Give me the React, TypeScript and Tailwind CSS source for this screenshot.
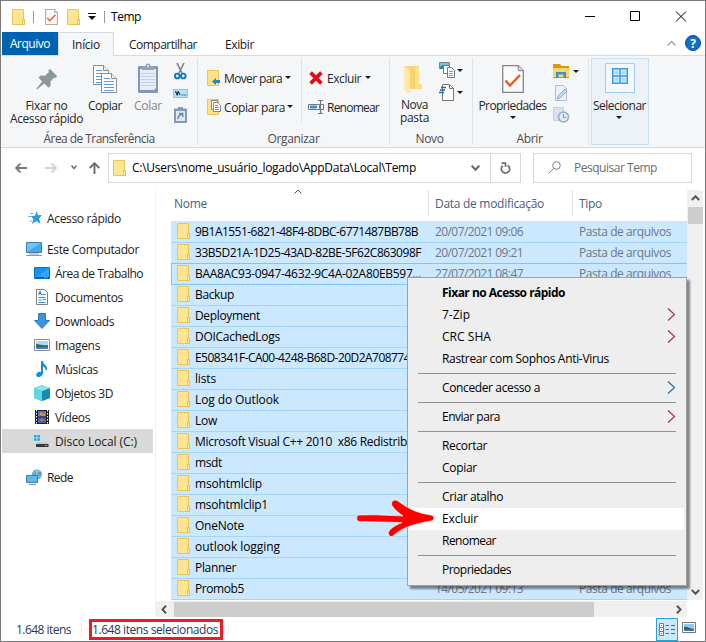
import { useLayoutEffect, useRef, type ReactNode } from "react";

/** Single line label whose letter spacing is tuned so that it spans `w` pixels. */
function T({ w, children, className = "" }: { w: number; children: string; className?: string }) {
  const ref = useRef<HTMLSpanElement>(null);
  useLayoutEffect(() => {
    const el = ref.current;
    if (!el) return;
    el.style.letterSpacing = "0px";
    const natural = el.getBoundingClientRect().width;
    el.style.letterSpacing = `${(w - natural) / children.length}px`;
  }, [w, children]);
  return (
    <span ref={ref} className={`inline-block shrink-0 whitespace-pre ${className}`}>
      {children}
    </span>
  );
}

function Folder({ className = "" }: { className?: string }) {
  return (
    <svg width="13" height="16" viewBox="0 0 13 16" className={`shrink-0 ${className}`}>
      <path d="M.5.5h11v10h1v5H.5z" fill="#ffe492" stroke="#e9c457" />
      <path d="M10.5 14.500V10.500h2v5h-2z" fill="#fff0b5" stroke="#e3b63a" strokeWidth=".8" />
    </svg>
  );
}

function Caret({ className = "" }: { className?: string }) {
  return (
    <svg width="6" height="3" viewBox="0 0 6 3" className={`shrink-0 ${className}`}>
      <path d="M0 0h6L3 3z" fill="#1a1a1a" />
    </svg>
  );
}

function Chevron({ d, color = "#555", w = 9, h = 6, sw = 2, className = "" }: { d: string; color?: string; w?: number; h?: number; sw?: number; className?: string }) {
  return (
    <svg width={w} height={h} viewBox={`0 0 ${w} ${h}`} fill="none" stroke={color} strokeWidth={sw} className={`shrink-0 ${className}`}>
      <path d={d} />
    </svg>
  );
}

function CheckDoc({ w, h }: { w: number; h: number }) {
  return (
    <svg width={w} height={h} viewBox="0 0 22 28" className="shrink-0">
      <path d="M.7.700h15.600l5 5v21.600H.700z" fill="#fafafa" stroke="#858585" strokeWidth="1.300" />
      <path d="M16.300.700v5h5" fill="#ddd" stroke="#858585" />
      <path d="M3.500 15.500l4.500 5L18 10" fill="none" stroke="#f1581e" strokeWidth="2.400" />
    </svg>
  );
}

function Page({ x, y }: { x: number; y: number }) {
  return (
    <g transform={`translate(${x} ${y})`}>
      <path d="M.5.5h10l5 5v14H.5z" fill="#fff" stroke="#8c8c8c" />
      <path d="M10.500.5v5h5" fill="#eee" stroke="#8c8c8c" />
      <path d="M3 5.500h6M3 8.500h10M3 11.500h10M3 14.500h10M3 17.500h10" stroke="#5c9de0" />
    </g>
  );
}

function TitleBar() {
  return (
    <div className="flex h-[31px] items-center">
      <Folder className="ml-[11px]" />
      <div className="ml-2 h-3 w-px bg-[#999]" />
      <div className="ml-[11px] flex"><CheckDoc w={13} h={16} /></div>
      <Folder className="ml-[9px]" />
      <svg width="8" height="7" viewBox="0 0 8 7" className="ml-2"><path d="M0 .5h8" stroke="#111" /><path d="M0 3h8L4 7z" fill="#111" /></svg>
      <div className="ml-2 h-3 w-px bg-[#999]" />
      <T w={30} className="ml-[6px] text-[12px] text-black">Temp</T>
      <div className="flex-1" />
      <svg width="102" height="11" viewBox="0 0 102 11" fill="none" stroke="#000" className="mr-[18px]">
        <path d="M0 5.500h10M45.500.5h9v9h-9zM91 .5l10 10M101 .5l-10 10" />
      </svg>
    </div>
  );
}

function Tabs() {
  return (
    <div className="relative z-10 flex h-6 items-stretch pl-px">
      <div className="flex h-[23px] w-14 items-center justify-center bg-[#0063b1] text-white"><T w={40}>Arquivo</T></div>
      <div className="flex w-14 items-center justify-center border border-b-0 border-[#d9dadc] bg-[#f5f6f7]"><T w={28}>Início</T></div>
      <div className="ml-[15px] flex items-center"><T w={68}>Compartilhar</T></div>
      <div className="ml-7 flex items-center"><T w={29}>Exibir</T></div>
      <div className="flex-1" />
      <Chevron d="M.5 5.500l4-4 4 4" color="#a5a5a5" sw={1.500} className="mt-2" />
      <div className="mr-1 ml-[9px] mt-[3px] flex size-4 items-center justify-center rounded-full border border-[#0a4f93] bg-[#0f6fce] text-[12px] font-bold text-white">?</div>
    </div>
  );
}

function Group({ label, w, className, children }: { label: string; w: number; className: string; children: ReactNode }) {
  return (
    <div className={`flex h-[87px] shrink-0 flex-col border-r border-[#e0e1e2] ${className}`}>
      <div className="flex h-[73px] items-start">{children}</div>
      <div className="flex h-[14px] items-center justify-center text-[#4c4c50]"><T w={w}>{label}</T></div>
    </div>
  );
}

const Scissors = () => (
  <svg width="13" height="17" viewBox="0 0 13 17" fill="none">
    <path d="M3 0l5.500 11M10 0L4.500 11" stroke="#788592" strokeWidth="1.600" />
    <ellipse cx="3.300" cy="13" rx="2.300" ry="2.400" stroke="#0878c8" strokeWidth="1.900" />
    <ellipse cx="9.300" cy="13" rx="2.300" ry="2.400" stroke="#0878c8" strokeWidth="1.900" />
  </svg>
);

const Clipboard = () => (
  <svg width="20" height="30" viewBox="0 0 20 30">
    <rect x="0" y="3" width="20" height="27" rx="1" fill="#8496b5" />
    <path d="M2 6h16v19l-2 2H2z" fill="#e4edf8" />
    <path d="M3 10.500h14M3 13.500h14M3 16.500h14M3 19.500h14M3 22.500h14" stroke="#c4d2e5" />
    <path d="M4 7V3h3.500a2.500 2.500 0 015 0H16v4z" fill="#93a3bd" />
    <circle cx="10" cy="3" r="1" fill="#e4edf8" />
  </svg>
);

const Shortcut = () => (
  <svg width="13" height="16" viewBox="0 0 13 16">
    <path d="M0 1.500h4V0h5v1.500h4V16H0z" fill="#8799b8" />
    <path d="M2 4h9v10H2z" fill="#dfe9f6" />
    <path d="M4 12c0-2.500 1-4 4-5M5 6.500h3.700v3.500" fill="none" stroke="#6e86ab" strokeWidth="1.500" />
  </svg>
);

function Ribbon() {
  return (
    <div className="flex h-[93px] border-y border-[#d9dadc] bg-[#f5f6f7] pt-[2px] text-[#262626]">
      <Group label="Área de Transferência" w={111} className="w-[197px]">
        <div className="ml-[9px] flex w-[73px] flex-col items-center">
          <svg width="21" height="21" viewBox="0 0 21 21" className="mt-[11px] mb-[9px]">
            <path d="M14 0l7 7-1 2-2-.5-3.500 4 .2 4-2.200 2.200-4.300-4.300L1 20.500l-.6-.7 5.800-7.400L2.500 8.800l2-2.300 4.500.3 3.800-3.600-.3-2z" fill="#8b979d" />
          </svg>
          <T w={42} className="leading-[13px]">Fixar no</T>
          <T w={73} className="leading-[13px]">Acesso rápido</T>
        </div>
        <div className="ml-[5px] flex w-[34px] flex-col items-center">
          <svg width="26" height="29" viewBox="0 0 26 29" className="mt-[7px] mb-[5px] ml-[2px]"><Page x={0} y={0} /><Page x={8} y={8} /></svg>
          <T w={34} className="leading-[13px]">Copiar</T>
        </div>
        <div className="ml-[12px] flex w-[28px] flex-col items-center text-[#858585]">
          <div className="mt-[5px] mb-[6px]"><Clipboard /></div>
          <T w={28} className="leading-[13px]">Colar</T>
        </div>
        <div className="ml-[11px] flex flex-col items-center pt-[5px]">
          <Scissors />
          <svg width="15" height="9" viewBox="0 0 15 9" className="mt-[9px]"><path d="M.5.5h14v8H.500z" fill="#b8e2ff" stroke="#8bc3e9" /><path d="M2.500 2l1.500 4M5 2l2 4M4.500 3v3.500M8.500 6h1.200M10.500 6h1.200M12.300 6h1" fill="none" stroke="#123c61" strokeWidth="1.200" /></svg>
          <div className="mt-[9px]"><Shortcut /></div>
        </div>
      </Group>

      <Group label="Organizar" w={52} className="w-[192px]">
        <div className="ml-[9px] flex h-[64px] w-[95px] flex-col border-r border-[#e0e1e2] pt-[12px]">
          <div className="flex h-4 items-center">
            <svg width="13" height="16" viewBox="0 0 13 16" className="shrink-0 overflow-visible"><path d="M.5.500h11v15H.5z" fill="#ffe288" stroke="#e9c457" /><path d="M5 11.500l4-3.500v2h4v3H9v2z" fill="#2a85d0" /></svg>
            <T w={58} className="ml-1">Mover para</T><Caret className="-mt-px ml-[3px]" />
          </div>
          <div className="mt-[13px] flex h-4 items-center">
            <svg width="13" height="16" viewBox="0 0 13 16" className="shrink-0 overflow-visible"><path d="M.5.500h11v15H.5z" fill="#ffe288" stroke="#e9c457" /><path d="M4.500 1.500h6v9h-6z" fill="#fff" stroke="#7e8790" /><path d="M6.500 3.500h4l3 3v6h-7z" fill="#fff" stroke="#7e8790" /><path d="M8 6.500h3M8 8.500h4M8 10.500h4" stroke="#4a94dc" /></svg>
            <T w={61} className="ml-1">Copiar para</T><Caret className="-mt-px ml-[2px]" />
          </div>
        </div>
        <div className="ml-[7px] flex flex-col pt-[12px]">
          <div className="flex h-4 items-center">
            <svg width="14" height="14" viewBox="0 0 13 13" className="mr-[3px]"><path d="M1.500 1.500l10 10M11.500 1.500l-10 10" stroke="#e40b12" strokeWidth="3.400" /></svg>
            <T w={34} className="ml-px">Excluir</T><Caret className="-mt-px ml-1" />
          </div>
          <div className="mt-[13px] flex h-4 items-center">
            <svg width="16" height="14" viewBox="0 0 16 14" className="-ml-px"><path d="M.5 4.500h11v5H.5zM13 4.500h2.500v5H13" fill="#fff" stroke="#777" /><path d="M2 5.500h7v3H2z" fill="#2890e5" /><path d="M10 .5h5M10 13.500h5M12.500 0v14" stroke="#777" strokeWidth="1.200" /></svg>
            <T w={52} className="ml-[3px]">Renomear</T>
          </div>
        </div>
      </Group>

      <Group label="Novo" w={28} className="w-[83px] [&>div:last-child]:pr-[3px]">
        <div className="ml-[9px] flex w-[31px] flex-col items-center">
          <svg width="20" height="28" viewBox="0 0 20 28" className="mt-[8px] mb-[4px] -ml-[4px]"><path d="M1 0h15v18l3 1v4H7L1 24z" fill="#f8d36f" /><path d="M12 0h4v18l3 1v4h-7z" fill="#ffdf85" /><path d="M1 0l6 4v22l-1 2-5-4z" fill="#ffe9a8" /></svg>
          <T w={27} className="leading-[13px]">Nova</T>
          <T w={29} className="leading-[13px]">pasta</T>
        </div>
        <div className="ml-[9px] pt-[4px]">
          <div className="flex items-center">
            <svg width="16" height="17" viewBox="0 0 16 17"><path d="M.5.500h10v6H.5z" fill="#77bde8" stroke="#778593" /><path d="M1 5l3-2 3 2v2H1z" fill="#35806f" /><path d="M4.500 3.500h6v8h-6z" fill="#fff" stroke="#777" /><path d="M8.500 5.500h4l3 3v7h-7z" fill="#fff" stroke="#777" /><path d="M10 9.500h4M10 11.500h4M10 13.500h4" stroke="#6ba4dc" /></svg>
            <Caret className="-mt-px ml-[2px]" />
          </div>
          <div className="mt-[5px] flex items-center">
            <svg width="16" height="17" viewBox="0 0 16 17"><path d="M3.500.5h7l4 4v12h-11z" fill="#fff" stroke="#777" /><path d="M10.500.500v4h4" fill="none" stroke="#777" /><path d="M2 3.500h5M1 6h5M0 8.500h5" stroke="#2365b4" strokeWidth="1.300" /></svg>
            <Caret className="-mt-px ml-[2px]" />
          </div>
        </div>
      </Group>

      <Group label="Abrir" w={26} className="w-[116px] [&>div:last-child]:pr-[2px]">
        <div className="ml-[5px] flex w-[69px] flex-col items-center">
          <div className="mt-[7px] mb-[6px]"><CheckDoc w={22} h={28} /></div>
          <T w={68} className="leading-[13px]">Propriedades</T>
          <Caret className="mt-[4px]" />
        </div>
        <div className="ml-[6px] flex flex-col gap-[6px] pt-[6px]">
          <div className="flex items-center">
            <svg width="17" height="15" viewBox="0 0 17 15"><path d="M0 0h7l1.500 2H16v12H0z" fill="#d99813" /><path d="M0 4h16v9H0z" fill="#ffd760" /><path d="M3 14V8h10v6h-2.500v-3.500h-5V14z" fill="#3293df" /></svg>
            <Caret className="-mt-px ml-[3px]" />
          </div>
          <svg width="15" height="16" viewBox="0 0 15 16"><path d="M2.500.5h8l3 3v12h-11z" fill="#eaf1fb" stroke="#aebed6" /><path d="M5 11L12 4l2 2-7 7-3 1z" fill="#c6d6ed" stroke="#96abc9" /></svg>
          <svg width="17" height="16" viewBox="0 0 17 16"><path d="M.5.500h10v13H.5z" fill="#d8e1ee" stroke="#c2cede" /><circle cx="10.500" cy="10" r="5" fill="#e2eaf5" stroke="#98aac5" strokeWidth="1.600" /><path d="M10.500 7v3.500H13" fill="none" stroke="#7f94b4" /></svg>
        </div>
      </Group>

      <div className="ml-[2px] flex h-[87px] w-[58px] shrink-0 flex-col items-center border border-[#c4e0f6] bg-[#ecf2f7] pt-[4px]">
        <div className="flex h-[30px] w-[30px] items-center justify-center border border-[#9fcef2] bg-[#f5f9fd]">
          <svg width="16" height="16" viewBox="0 0 16 16" className="-mt-[5px]"><path d="M.750.750h14.500v14.500H.750zM8 0v16M0 8h16" fill="#e1f2ff" stroke="#3c99df" strokeWidth="1.500" /><path d="M2.500 2.500h4v4h-4zM9.500 2.500h4v4h-4zM2.500 9.500h4v4h-4zM9.500 9.500h4v4h-4z" fill="#a9dbfb" /></svg>
        </div>
        <T w={53} className="mt-[6px] mr-px leading-[13px]">Selecionar</T>
        <Caret className="mt-[4px] mr-[2px]" />
      </div>
    </div>
  );
}

function AddressBar() {
  return (
    <div className="mb-[2px] flex h-[39px] items-center text-black">
      <svg width="12" height="10" viewBox="0 0 12 10" fill="none" stroke="#777" strokeWidth="1.800" className="ml-[14px]"><path d="M12 5H1M5.500.5L1 5l4.500 4.500" /></svg>
      <svg width="12" height="10" viewBox="0 0 12 10" fill="none" stroke="#d2d2d2" strokeWidth="1.800" className="ml-[18px]"><path d="M0 5h11M6.500.500L11 5l-4.500 4.500" /></svg>
      <Chevron d="M.5.500l2.500 3 2.500-3" w={6} h={5} color="#777" sw={1.600} className="mb-px ml-[14px]" />
      <svg width="11" height="12" viewBox="0 0 11 12" fill="none" stroke="#6b6b6b" strokeWidth="1.900" className="ml-[12px]"><path d="M5.500 12V1M.7 6l4.800-4.800L10.300 6" /></svg>
      <div className="ml-2 flex h-[30px] w-[383px] items-center border border-[#d9d9d9]">
        <Folder className="ml-1" />
        <T w={284} className="ml-[6px]">C:\Users\nome_usuário_logado\AppData\Local\Temp</T>
        <div className="flex-1" />
        <Chevron d="M.7.700l3.800 4 3.800-4" color="#666" className="mr-[10px]" />
      </div>
      <div className="flex h-[30px] w-[30px] items-center justify-center border border-l-0 border-[#d9d9d9]">
        <svg width="11" height="12" viewBox="0 0 11 12" fill="none" stroke="#6b6b6b" strokeWidth="1.700"><path d="M7.600 3.200A4.200 4.200 0 112.800 3.600M1.500 1.200H5.500V5" /></svg>
      </div>
      <div className="ml-[12px] flex h-[30px] w-[159px] items-center border border-[#d9d9d9] text-[#6b6b6b]">
        <svg width="13" height="13" viewBox="0 0 13 13" fill="none" stroke="#808080" className="ml-[14px]"><circle cx="8.500" cy="4.500" r="3.800" /><path d="M5.800 7.300L.5 12.500" /></svg>
        <T w={83} className="ml-[13px]">Pesquisar Temp</T>
      </div>
    </div>
  );
}

const navIcons: Record<string, ReactNode> = {
  star: <><path d="M8.500 1l1.500 4.300 4-.3-3 3.400L12.500 14 8.500 11l-4.500 3 1.500-5L2.500 6.300l4.500-.5z" fill="#1f9de8" /><path d="M2 3.500h3.500M0 6.500h4M1.500 11h3" stroke="#69b9e9" /></>,
  pc: <><path d="M.5 1.500h15v10H.5z" fill="#6fc3f9" stroke="#3d7fa8" /><path d="M1 11L15 2v9z" fill="#3fa9ef" /><path d="M0 14.500h16M3 13h10" stroke="#8d9aa6" /></>,
  desk: <><path d="M.5 2.500h15v11H.5z" fill="#1592f2" stroke="#0a6fbd" /><path d="M1 13L15 3v10z" fill="#2fa7ff" /><path d="M2 12.500h8M12 12.500h1M14 12.500h1" stroke="#0b4a80" /></>,
  doc: <><path d="M2.500.500h8l3 3v12h-11z" fill="#fff" stroke="#808080" /><path d="M4.500 6L6 2.500l1.500 3.500M8.500 5.500h3M4.500 8.500h7M4.500 11h3M4.500 13.500h7M9 10.500h3" fill="none" stroke="#2f8bd0" strokeWidth="1.200" /></>,
  down: <path d="M4.500.500h7v7h4L8 15.500.5 7.500h4z" fill="#3c94df" stroke="#2c79bd" />,
  image: <><path d="M.5 2.500h15v11H.5z" fill="#fff" stroke="#8b8b8b" /><path d="M2 4h12v8H2z" fill="#a9dcf7" /><path d="M2 7c5 0 6 2 12 1v2H2z" fill="#35695c" /><path d="M2 10h12v2H2z" fill="#4283ae" /></>,
  music: <path d="M7 0h2c0 4 5 4 4 9h-1.500c0-2-1-3-2.500-3.500V12c0 2-2 4-4.500 4S1.500 13.500 3 12c1-1.200 2.500-1.500 4-1z" fill="#168edc" />,
  cube: <><path d="M8 0l8 3v10l-8 3-8-3V3z" fill="#35bdd2" /><path d="M8 6l8-3v10l-8 3z" fill="#168ba8" /><path d="M0 3l8-3 8 3-8 3z" fill="#8de5ec" /><path d="M0 3l8 3v10l-8-3z" fill="#62d5e2" /></>,
  video: <><path d="M1 1h14v14H1z" fill="#222" /><path d="M4 2h8v5.500H4z" fill="#4c78c9" /><path d="M4 8.500h8V14H4z" fill="#3765b8" /><path d="M5 6l2-3 2 2 2-1v3z" fill="#e39635" /><path d="M5 12l3-3 3 3z" fill="#e05a3c" /><path d="M2.500 1v14M13.500 1v14" stroke="#fff" strokeDasharray="1.500 1.500" /></>,
  disk: <><path d="M0 2h2.500v2.500H0zM3.300 2h2.700v2.500H3.300zM0 5.300h2.500v2.500H0zM3.300 5.300h2.700v2.500H3.300z" fill="#19aeea" /><path d="M4 9h8l2.500 2v2H2v-2z" fill="#c5c9cc" /><path d="M2 11h12.500v3H2z" fill="#33383b" /><path d="M11 12.500h2" stroke="#63d454" strokeWidth="1.200" /></>,
  net: <><circle cx="11" cy="5.500" r="5" fill="#5f9fc1" /><path d="M7 5c2-3 5-4 7-2M7 8c3 1 6 1 9-2M11 0v10" fill="none" stroke="#abd5e6" /><path d="M.5 6.500h11v7H.5z" fill="#59b8f4" stroke="#417ea6" /><path d="M3 15.500h7" stroke="#8793a0" /></>,
};

const nav: { icon: string; label: string; w: number; cls: string }[] = [
  { icon: "star", label: "Acesso rápido", w: 74, cls: "mb-[7px] pl-[26px]" },
  { icon: "pc", label: "Este Computador", w: 92, cls: "pl-[24px]" },
  { icon: "desk", label: "Área de Trabalho", w: 88, cls: "pl-[32px]" },
  { icon: "doc", label: "Documentos", w: 68, cls: "pl-[32px]" },
  { icon: "down", label: "Downloads", w: 59, cls: "pl-[32px]" },
  { icon: "image", label: "Imagens", w: 45, cls: "pl-[32px]" },
  { icon: "music", label: "Músicas", w: 43, cls: "pl-[32px]" },
  { icon: "cube", label: "Objetos 3D", w: 58, cls: "pl-[32px]" },
  { icon: "video", label: "Vídeos", w: 35, cls: "pl-[32px]" },
  { icon: "disk", label: "Disco Local (C:)", w: 82, cls: "bg-[#d9d9d9] pl-[32px]" },
  { icon: "net", label: "Rede", w: 26, cls: "mt-[12px] pl-[24px]" },
];

function Sidebar() {
  return (
    <div className="flex w-[155px] shrink-0 flex-col border-r border-[#f0f0f0] pt-[16px]">
      {nav.map((n) => (
        <div key={n.label} className={`mr-[2px] ml-px flex h-6 items-center ${n.cls}`}>
          <svg width="16" height="16" viewBox="0 0 16 16" className="shrink-0" fill="none">{navIcons[n.icon]}</svg>
          <T w={n.w} className={n.icon === "star" ? "ml-[3px]" : "ml-[5px]"}>{n.label}</T>
        </div>
      ))}
    </div>
  );
}

const files: { name: string; w: number; date?: string }[] = [
  { name: "9B1A1551-6821-48F4-8DBC-6771487BB78B", w: 223, date: "20/07/2021 09:06" },
  { name: "33B5D21A-1D25-43AD-82BE-5F62C863098F", w: 226, date: "20/07/2021 09:21" },
  { name: "BAA8AC93-0947-4632-9C4A-02A80EB597...", w: 226, date: "27/07/2021 08:47" },
  { name: "Backup", w: 39 },
  { name: "Deployment", w: 65 },
  { name: "DOICachedLogs", w: 85 },
  { name: "E508341F-CA00-4248-B68D-20D2A708774", w: 215 },
  { name: "lists", w: 21 },
  { name: "Log do Outlook", w: 84 },
  { name: "Low", w: 22 },
  { name: "Microsoft Visual C++ 2010  x86 Redistrib", w: 212 },
  { name: "msdt", w: 27 },
  { name: "msohtmlclip", w: 67 },
  { name: "msohtmlclip1", w: 73 },
  { name: "OneNote", w: 49 },
  { name: "outlook logging", w: 85 },
  { name: "Planner", w: 41 },
  { name: "Promob5", w: 49, date: "14/05/2021 09:13" },
];

function FileList() {
  return (
    <div className="flex min-w-0 flex-1 flex-col">
      <div className="flex h-[31px] pl-[15px] text-[#4c607a]">
        <div className="flex h-[26px] w-[258px] items-center border-r border-[#e3e3e3]">
          <T w={33} className="ml-[3px]">Nome</T>
          <Chevron d="M.5 4.500l3.500-3.500 3.500 3.500" w={8} h={5} sw={1} color="#555" className="mb-[23px] ml-[87px]" />
        </div>
        <div className="flex h-[26px] w-[144px] items-center border-r border-[#e3e3e3]"><T w={109} className="ml-[6px]">Data de modificação</T></div>
        <div className="flex h-[26px] items-center"><T w={23} className="ml-[6px]">Tipo</T></div>
      </div>
      <div className="ml-[15px] w-[516px] border-t border-[#cce8ff]">
        {files.map((f, i) => (
          <div
            key={f.name}
            className={`flex h-[21px] items-center border-b bg-[#cce8ff] pb-[2px] ${i === 1 || i === 2 ? "border-[#7fc3fa]" : "border-[#a2d5fc]"} ${i === 2 ? "border-l border-l-[#7fc3fa]" : ""}`}
          >
            <Folder className={i === 2 ? "ml-[5px]" : "ml-[6px]"} />
            <div className="ml-[5px] w-[240px] shrink-0 text-black"><T w={f.w}>{f.name}</T></div>
            {f.date && <div className="w-[144px] shrink-0 text-[#6d7882]"><T w={88}>{f.date}</T></div>}
            {f.date && <T w={92} className="text-[#6d7882]">Pasta de arquivos</T>}
          </div>
        ))}
      </div>
      <div className="mt-px flex h-[16px] w-[531px] items-center bg-[#f0f0f0]">
        <Chevron d="M5 .8L1.500 4.500 5 8.200" w={6} h={9} className="ml-[5px]" />
        <div className="ml-[7px] h-[15px] w-[420px] bg-[#cdcdcd]" />
        <div className="flex-1" />
        <Chevron d="M1 .800l3.500 3.700L1 8.200" w={6} h={9} className="mr-[5px]" />
      </div>
    </div>
  );
}

type Entry = { label: string; w: number; arrow?: string; bold?: boolean; hot?: boolean } | null;
const menu: Entry[] = [
  { label: "Fixar no Acesso rápido", w: 123, bold: true },
  { label: "7-Zip", w: 28, arrow: "#a33a3f" },
  { label: "CRC SHA", w: 49, arrow: "#a33a3f" },
  { label: "Rastrear com Sophos Anti-Virus", w: 167 },
  null,
  { label: "Conceder acesso a", w: 98, arrow: "#2c6a9c" },
  null,
  { label: "Enviar para", w: 58, arrow: "#a33a3f" },
  null,
  { label: "Recortar", w: 45 },
  { label: "Copiar", w: 35 },
  null,
  { label: "Criar atalho", w: 61 },
  { label: "Excluir", w: 36, hot: true },
  { label: "Renomear", w: 54 },
  null,
  { label: "Propriedades", w: 69 },
];

function ContextMenu() {
  return (
    <div className="absolute top-[276px] left-[406px] z-20 h-[309px] w-[280px] border border-[#a0a0a0] bg-[#eeeeee] px-[2px] py-1 text-black shadow-[3px_3px_2px_rgba(0,0,0,0.45)]">
      {menu.map((m, i) =>
        m === null ? (
          <div key={i} className="flex h-[7px] items-center pr-[8px] pl-[8px]"><div className="h-px w-full bg-[#919191]" /></div>
        ) : (
          <div key={i} className={`flex h-[22px] items-center justify-between pr-[8px] pb-px pl-[32px] ${m.hot ? "bg-white" : ""}`}>
            <T w={m.w} className={m.bold ? "font-bold" : ""}>{m.label}</T>
            {m.arrow && <Chevron d="M1 .5l6.500 6L1 12.500" w={9} h={13} sw={1.200} color={m.arrow} />}
          </div>
        ),
      )}
    </div>
  );
}

function StatusBar() {
  return (
    <div className="flex h-[24px] items-center text-[#1e395b]">
      <T w={55} className="ml-[15px]">1.648 itens</T>
      <div className="ml-[10px] h-3 w-px bg-[#e8e8e8]" />
      <div className="ml-[7px] flex h-[21px] w-[134px] items-center border-3 border-[#ed1c24]"><T w={126}>1.648 itens selecionados</T></div>
      <div className="ml-[5px] h-3 w-px bg-[#eee]" />
      <div className="flex-1" />
      <div className="flex h-[23px] w-[22px] items-center justify-center border border-[#2a9fdb] bg-[#cbe8f6]">
        <svg width="16" height="13" viewBox="0 0 16 13" fill="none"><path d="M.5.500h4v12h-4zM.5 4.500h4M.5 8.500h4" fill="#fff" stroke="#777" /><path d="M6.500 2.500H10M6.500 6.500H10M6.500 10.500H10M12 2.500h4M12 6.500h4M12 10.500h4" stroke="#666" /><path d="M2 2.500h1" stroke="#555" /><path d="M2 6.500h1" stroke="#2d8cd6" /><path d="M2 10.500h1" stroke="#e12" /></svg>
      </div>
      <svg width="14" height="11" viewBox="0 0 14 11" className="mr-[9px] mb-[3px] ml-1"><path d="M.5.500h13v10H.5z" fill="#fff" stroke="#777" /><path d="M2 2h10v7H2z" fill="#98c9ed" /><path d="M2 5c3-1 5 2 10 2v1H2z" fill="#315f5f" /><path d="M2 7.500h10V9H2z" fill="#387caf" /></svg>
    </div>
  );
}

export default function App() {
  return (
    <div className="relative flex h-[642px] w-[706px] flex-col overflow-hidden border border-[#7b7b7b] bg-white font-['Open_Sans','Noto_Sans',sans-serif] text-[12px] leading-[15px] text-[#1b1b1b]">
      <TitleBar />
      <Tabs />
      <div className="-mt-px flex flex-col"><Ribbon /></div>
      <AddressBar />
      <div className="flex h-[428px] shrink-0 pt-px">
        <Sidebar />
        <FileList />
        <div className="mr-[2px] flex h-[410px] w-4 shrink-0 flex-col items-center bg-[#f0f0f0]">
          <Chevron d="M.800 5l3.700-3.700L8.200 5" className="mt-[5px]" />
          <div className="mt-[6px] h-[17px] w-[15px] bg-[#cdcdcd]" />
          <div className="flex-1" />
          <Chevron d="M.800 1l3.700 3.700L8.200 1" className="mb-[5px]" />
        </div>
      </div>
      <StatusBar />
      <ContextMenu />
      <svg width="82" height="40" viewBox="0 0 82 40" className="absolute top-[498px] left-[354px] z-30">
        <path d="M4 16C1 17 1 22 4 22.500L47 23.500C41 26 36 29 34 32c-2 3 1 7 4 5 7-7 19-12 38-15 4-1 4-5 0-6C62 14 54 10 43 2c-4-3-9 2-5 6 2 3 6 6 10 9L20 15.800z" fill="#ff0000" stroke="#fff" strokeWidth=".6" />
      </svg>
    </div>
  );
}
